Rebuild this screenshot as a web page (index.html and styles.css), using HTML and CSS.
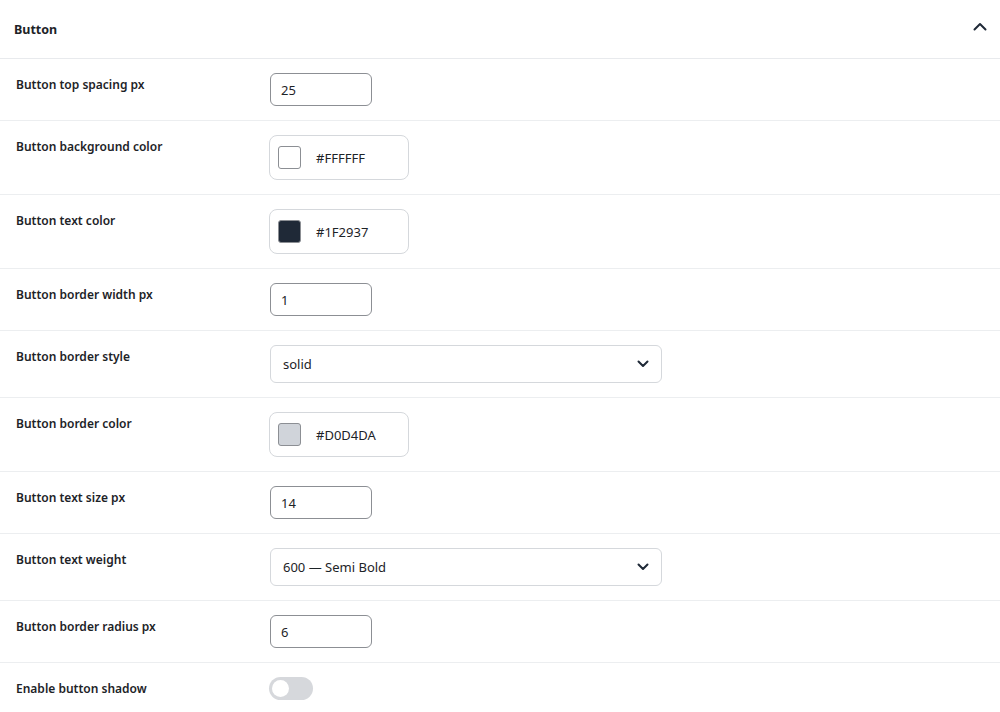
FILE: index.html
```html
<!DOCTYPE html>
<html lang="en">
<head>
  <meta charset="UTF-8">
  <meta name="viewport" content="width=device-width, initial-scale=1.0">
  <title>Button settings</title>
  <link rel="stylesheet" href="styles.css">
</head>
<body>
  <section class="panel">
    <div class="panel-head">
      <h2>Button</h2>
      <svg class="chevron-up" width="14" height="9" viewBox="0 0 14 9" fill="none">
        <path d="M1.5 7.5L7 2l5.5 5.5" stroke="#1f2937" stroke-width="2" stroke-linecap="round" stroke-linejoin="round"/>
      </svg>
    </div>

    <div class="row">
      <label class="label">Button top spacing px</label>
      <input class="field" type="text" value="25">
    </div>

    <div class="row">
      <label class="label">Button background color</label>
      <div class="color-field">
        <span class="swatch" style="background:#FFFFFF"></span>
        <span class="hex">#FFFFFF</span>
      </div>
    </div>

    <div class="row">
      <label class="label">Button text color</label>
      <div class="color-field">
        <span class="swatch" style="background:#1F2937"></span>
        <span class="hex">#1F2937</span>
      </div>
    </div>

    <div class="row">
      <label class="label">Button border width px</label>
      <input class="field" type="text" value="1">
    </div>

    <div class="row">
      <label class="label">Button border style</label>
      <div class="select">
        <span>solid</span>
        <svg width="12" height="8" viewBox="0 0 12 8" fill="none">
          <path d="M1.5 1.5L6 6l4.5-4.5" stroke="#1f2937" stroke-width="2" stroke-linecap="round" stroke-linejoin="round"/>
        </svg>
      </div>
    </div>

    <div class="row">
      <label class="label">Button border color</label>
      <div class="color-field">
        <span class="swatch" style="background:#D0D4DA"></span>
        <span class="hex">#D0D4DA</span>
      </div>
    </div>

    <div class="row">
      <label class="label">Button text size px</label>
      <input class="field" type="text" value="14">
    </div>

    <div class="row">
      <label class="label">Button text weight</label>
      <div class="select">
        <span>600 — Semi Bold</span>
        <svg width="12" height="8" viewBox="0 0 12 8" fill="none">
          <path d="M1.5 1.5L6 6l4.5-4.5" stroke="#1f2937" stroke-width="2" stroke-linecap="round" stroke-linejoin="round"/>
        </svg>
      </div>
    </div>

    <div class="row">
      <label class="label">Button border radius px</label>
      <input class="field" type="text" value="6">
    </div>

    <div class="row">
      <label class="label">Enable button shadow</label>
      <span class="toggle"><span class="knob"></span></span>
    </div>
  </section>
</body>
</html>
```

FILE: styles.css
```css
body {
  margin: 0;
  background: #fff;
  font-family: 'Noto Sans', 'Open Sans', sans-serif;
  color: #1f2937;
}
.panel {
  background: #fff;
}
.panel-head {
  display: flex;
  align-items: center;
  justify-content: space-between;
  height: 58px;
  padding: 0 14px;
  border-bottom: 1px solid #e8eaed;
}
.panel-head h2 {
  margin: 0;
  font-size: 12.5px;
  font-weight: 700;
  color: #1d2327;
}
.chevron-up {
  margin-right: -1px;
  margin-top: -6px;
}
.row {
  display: flex;
  align-items: flex-start;
  padding: 14px 16px;
  border-bottom: 1px solid #eceef0;
}
.label {
  width: 254px;
  flex-shrink: 0;
  margin-top: 2px;
  font-size: 12px;
  font-weight: 600;
  line-height: 20px;
  color: #1d2327;
}
.field {
  width: 102px;
  height: 33px;
  box-sizing: border-box;
  border: 1px solid #8c8f94;
  border-radius: 6px;
  padding: 0 10px;
  font-family: inherit;
  font-size: 13px;
  color: #1d2327;
  background: #fff;
}
.color-field {
  display: flex;
  align-items: center;
  gap: 15px;
  width: 140px;
  height: 45px;
  box-sizing: border-box;
  margin-left: -1px;
  padding: 0 8px;
  border: 1px solid #d5d8dc;
  border-radius: 8px;
  font-size: 13px;
}
.swatch {
  width: 23px;
  height: 23px;
  box-sizing: border-box;
  border: 1px solid #8c8f94;
  border-radius: 3px;
}
.hex {
  color: #1d2327;
}
.select {
  display: flex;
  align-items: center;
  justify-content: space-between;
  width: 392px;
  height: 38px;
  box-sizing: border-box;
  padding: 0 12px;
  border: 1px solid #d5d8dc;
  border-radius: 6px;
  font-size: 13px;
  color: #1d2327;
}
.toggle {
  display: inline-block;
  position: relative;
  width: 44px;
  height: 23px;
  margin-left: -1px;
  border-radius: 12px;
  background: #d6d8dc;
}
.knob {
  position: absolute;
  top: 3px;
  left: 3px;
  width: 17px;
  height: 17px;
  border-radius: 50%;
  background: #fff;
}
```
